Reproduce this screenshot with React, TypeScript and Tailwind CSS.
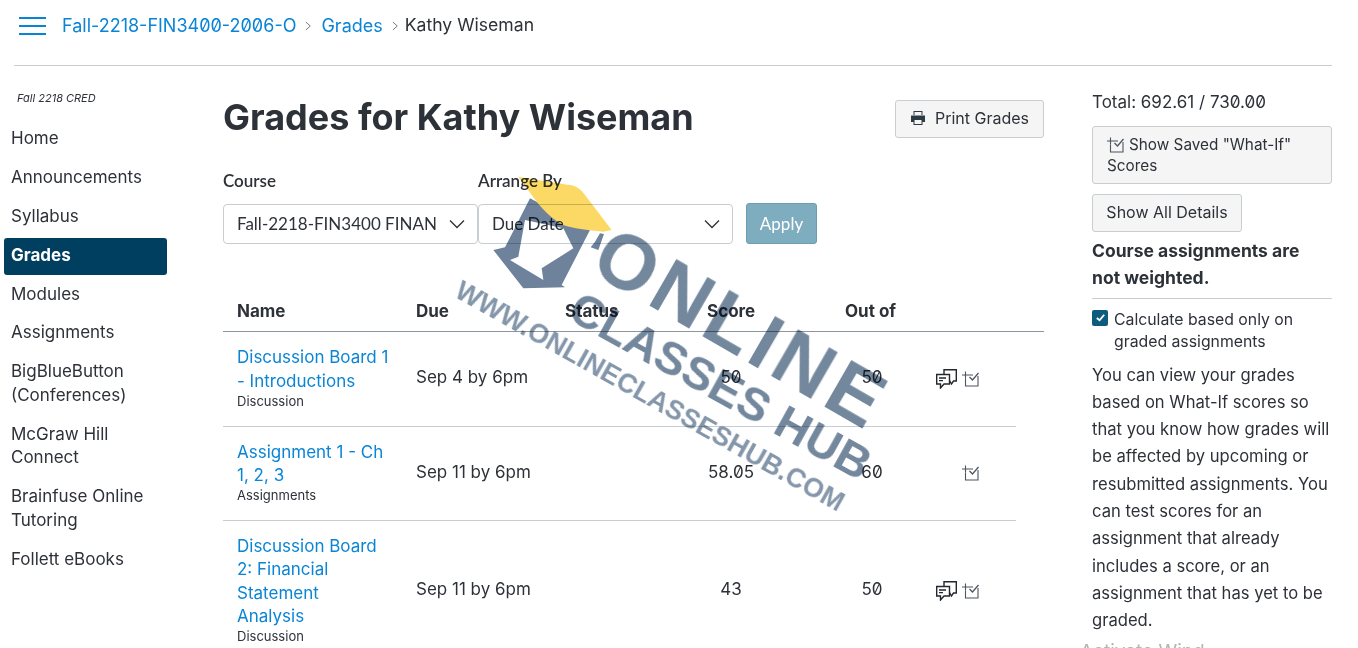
import React from "react";

const font = { fontFamily: "Inter, 'Liberation Sans', sans-serif" };

function WhatIf({ className = "" }: { className?: string }) {
  return (
    <svg viewBox="0 0 18 17" className={className} fill="none" stroke="#4d5560" strokeWidth="1.1">
      <path d="M0 5H7M3.5 1.5V8.5" />
      <path d="M3.5 8.5V16H16V6M7 5H11" />
      <path d="M7.5 7L10.5 10L16.5 3" strokeWidth="1.3" />
    </svg>
  );
}

function Comment() {
  return (
    <svg viewBox="0 0 21 20" className="w-[21px] h-[20px]" fill="#fff" stroke="#23282e" strokeWidth="1.4">
      <path d="M8 5V0.7H20.3V12H17.5L15.5 15L13.5 11.5" fill="none" />
      <path d="M0.7 5.5H13.5V15H8L4.5 19V15H0.7Z" />
      <path d="M3 9H10M3 11.7H7" strokeWidth="1.3" />
    </svg>
  );
}

function Chevron() {
  return (
    <svg viewBox="0 0 16 10" className="w-[16px] h-[10px]" fill="none" stroke="#2d3138" strokeWidth="1.3">
      <path d="M1 1.5L8 8.5L15 1.5" />
    </svg>
  );
}

const Crumb = () => (
  <svg viewBox="0 0 8 10" className="w-[7px] h-[10px]" fill="none" stroke="#6b7780" strokeWidth="1.1">
    <path d="M1 0.5L6 5L1 9.5" />
  </svg>
);

const nav = ["Home", "Announcements", "Syllabus", "Grades", "Modules", "Assignments", "BigBlueButton (Conferences)", "McGraw Hill Connect", "Brainfuse Online Tutoring", "Follett eBooks"];

const rows = [
  { name: "Discussion Board 1 - Introductions", type: "Discussion", due: "Sep 4 by 6pm", score: "50", out: "50", comment: true, h: "h-[95px]" },
  { name: "Assignment 1 - Ch 1, 2, 3", type: "Assignments", due: "Sep 11 by 6pm", score: "58.05", out: "60", comment: false, h: "h-[94px]" },
  { name: "Discussion Board 2: Financial Statement Analysis", type: "Discussion", due: "Sep 11 by 6pm", score: "43", out: "50", comment: true, h: "h-[141px]" },
];

function Select({ label }: { label: string }) {
  return (
    <div className="w-[255px] h-[40px] border border-[#c7cdd1] rounded-[4px] bg-white flex items-center justify-between pl-[13px] pr-[12px] text-[17px] font-['Lato'] whitespace-nowrap overflow-hidden">
      <span>{label}</span>
      <Chevron />
    </div>
  );
}

function Watermark() {
  return (
    <div className="absolute inset-0 pointer-events-none mix-blend-multiply overflow-hidden">
      <svg viewBox="0 0 450 390" className="absolute left-[480px] top-[170px] w-[150px] h-[130px]">
        <path fillRule="evenodd" d="M150 85L330 180L245 345L255 352L130 355L40 240L75 232ZM135 150L250 175L280 235L185 295L190 330L90 270L115 260Z" fill="#6e839b" />
        <path d="M360 190L372 192L355 240L332 232L345 215Z" fill="#6e839b" />
        <path d="M115 20C170 30 240 40 270 45C290 48 305 60 315 75L395 180L370 185C320 180 280 175 250 165C220 150 190 120 170 95Z" fill="#fbd964" />
      </svg>
      <div className="absolute left-[621px] top-[213px] origin-top-left rotate-[30deg] text-[78px] leading-none font-bold tracking-[5px] text-[#73879d] font-['Liberation_Sans'] whitespace-nowrap blur-[0.4px]">ONLINE</div>
      <div className="absolute left-[585px] top-[283px] origin-top-left rotate-[29deg] text-[47px] leading-none font-bold text-[#73879d] font-['Liberation_Sans'] whitespace-nowrap blur-[0.4px]">CLASSES HUB</div>
      <div className="absolute left-[464px] top-[277px] origin-top-left rotate-[29.3deg] text-[27px] leading-none font-bold text-[#8496aa] font-['Liberation_Sans'] whitespace-nowrap blur-[0.4px]">WWW.ONLINECLASSESHUB.COM</div>
    </div>
  );
}

export default function App() {
  return (
    <div style={font} className="relative h-[648px] w-[1358px] overflow-hidden bg-white text-[#2d3138] text-[17px] slashed-zero">
      <header className="h-[66px] ml-[14px] mr-[26px] border-b border-[#c7cdd1] flex items-center pb-[14px]">
        <div className="ml-[5px] w-[27px] flex flex-col gap-[6px]">
          <div className="h-[2px] bg-[#0a85d6]" />
          <div className="h-[2px] bg-[#0a85d6]" />
          <div className="h-[2px] bg-[#0a85d6]" />
        </div>
        <nav className="ml-[16px] flex items-center gap-[9px] text-[18px]">
          <span className="text-[#0a85d6]">Fall-2218-FIN3400-2006-O</span>
          <Crumb />
          <span className="text-[#0a85d6]">Grades</span>
          <Crumb />
          <span className="text-[17.6px] -ml-[3px]">Kathy Wiseman</span>
        </nav>
      </header>

      <div className="flex">
        <aside className="w-[163px] ml-[4px] shrink-0 pt-[25px]">
          <div className="ml-[13px] text-[11px] italic leading-[14px] mb-[16px]">Fall 2218 CRED</div>
          <ul className="flex flex-col gap-[1.4px]">
            {nav.map((n) => (
              <li key={n} className={`px-[7px] pt-[6px] pb-[8px] leading-[23.5px] rounded-[3px] ${n === "Grades" ? "bg-[#003f5f] text-white font-bold" : ""}`}>{n}</li>
            ))}
          </ul>
        </aside>

        <main className="ml-[56px] w-[821px] shrink-0 pt-[34px]">
          <div className="flex items-start justify-between">
            <h1 className="text-[36px] font-bold leading-[34px] whitespace-nowrap">Grades for Kathy Wiseman</h1>
            <button className="h-[38px] w-[149px] border border-[#c7cdd1] rounded-[3px] bg-[#f5f5f5] flex items-center justify-center gap-[9px] text-[16px] pb-[2px]">
              <svg viewBox="0 0 16 16" className="w-[16px] h-[16px]" fill="#2d3b45">
                <path d="M3.5 1H12.5V5H11.5V2H4.5V5H3.5ZM1 5.5H15V12H12.5V15H3.5V12H1ZM4.5 10V14H11.5V10Z" fillRule="evenodd" />
              </svg>
              Print Grades
            </button>
          </div>

          <div className="mt-[33px] flex items-end font-['Lato']">
            <div>
              <div className="font-semibold text-[17px] leading-[20px] mb-[13px]">Course</div>
              <Select label="Fall-2218-FIN3400 FINAN" />
            </div>
            <div>
              <div className="font-semibold text-[17px] leading-[20px] mb-[13px]">Arrange By</div>
              <Select label="Due Date" />
            </div>
            <button className="ml-[13px] w-[71px] h-[41px] rounded-[3px] bg-[#7fadc0] border border-[#6f9db0] text-white text-[17px]">Apply</button>
          </div>

          <div className="mt-[55px] h-[33px] border-b border-[#8b969e] font-bold flex items-start leading-[24px]">
            <div className="w-[193px] pl-[14px]">Name</div>
            <div className="w-[149px]">Due</div>
            <div className="w-[142px]">Status</div>
            <div className="w-[138px]">Score</div>
            <div className="w-[120px] whitespace-nowrap">Out of</div>
          </div>

          {rows.map((r) => (
            <div key={r.name} className={`w-[793px] ${r.h} border-b border-[#c7cdd1] flex items-center`}>
              <div className="w-[193px] pl-[14px] pr-[26.5px] pb-[3px]">
                <div className="text-[#0a85d6] leading-[23.3px]">{r.name}</div>
                <div className="text-[13px] leading-[16px]">{r.type}</div>
              </div>
              <div className="w-[149px] pb-[2px]">{r.due}</div>
              <div className="w-[113px]" />
              <div className="w-[106px] text-center pb-[2px]">{r.score}</div>
              <div className="w-[176px] text-center pb-[2px]">{r.out}</div>
              <div className="w-[44px] flex items-center justify-start gap-[5px] -ml-[24px]">
                {r.comment ? <Comment /> : <div className="w-[21px]" />}
                <WhatIf className="w-[18px] h-[17px] shrink-0 mb-[2px]" />
              </div>
            </div>
          ))}
        </main>

        <aside className="ml-[48px] w-[240px] shrink-0 pt-[26px] leading-[27.3px]">
          <div className="leading-[21px] whitespace-nowrap">Total: 692.61 / 730.00</div>
          <button className="mt-[13px] w-full h-[58px] px-[14px] text-left border border-[#c7cdd1] rounded-[3px] bg-[#f5f5f5] leading-[21px] text-[15.3px]">
            <WhatIf className="inline-block w-[18px] h-[17px] mr-[4px] align-[-3px]" />
            Show Saved "What-If" Scores
          </button>
          <button className="mt-[10px] block w-[150px] h-[38px] border border-[#c7cdd1] rounded-[3px] bg-[#f5f5f5] text-[16px] leading-[20px] pb-[2px]">Show All Details</button>
          <div className="mt-[5px] font-bold text-[17.5px] pb-[6px] border-b border-[#c7cdd1] pr-[20px]">Course assignments are not weighted.</div>
          <div className="mt-[10px] flex gap-[6px] leading-[22px] text-[15.8px]">
            <div className="w-[16px] h-[16px] mt-[1px] shrink-0 rounded-[2px] bg-[#0e5c7d] flex items-center justify-center">
              <svg viewBox="0 0 12 12" className="w-[11px] h-[11px]" fill="none" stroke="#fff" strokeWidth="2"><path d="M2 6.5L5 9L10 3" /></svg>
            </div>
            <div>Calculate based only on graded assignments</div>
          </div>
          <p className="mt-[9px] text-[16.6px]">You can view your grades based on What-If scores so that you know how grades will be affected by upcoming or resubmitted assignments. You can test scores for an assignment that already includes a score, or an assignment that has yet to be graded.</p>
        </aside>
      </div>

      <Watermark />
      <div className="absolute left-[1080px] top-[640px] text-[19px] text-[#b5b5b5] leading-[24px] whitespace-nowrap">Activate Wind</div>
    </div>
  );
}
